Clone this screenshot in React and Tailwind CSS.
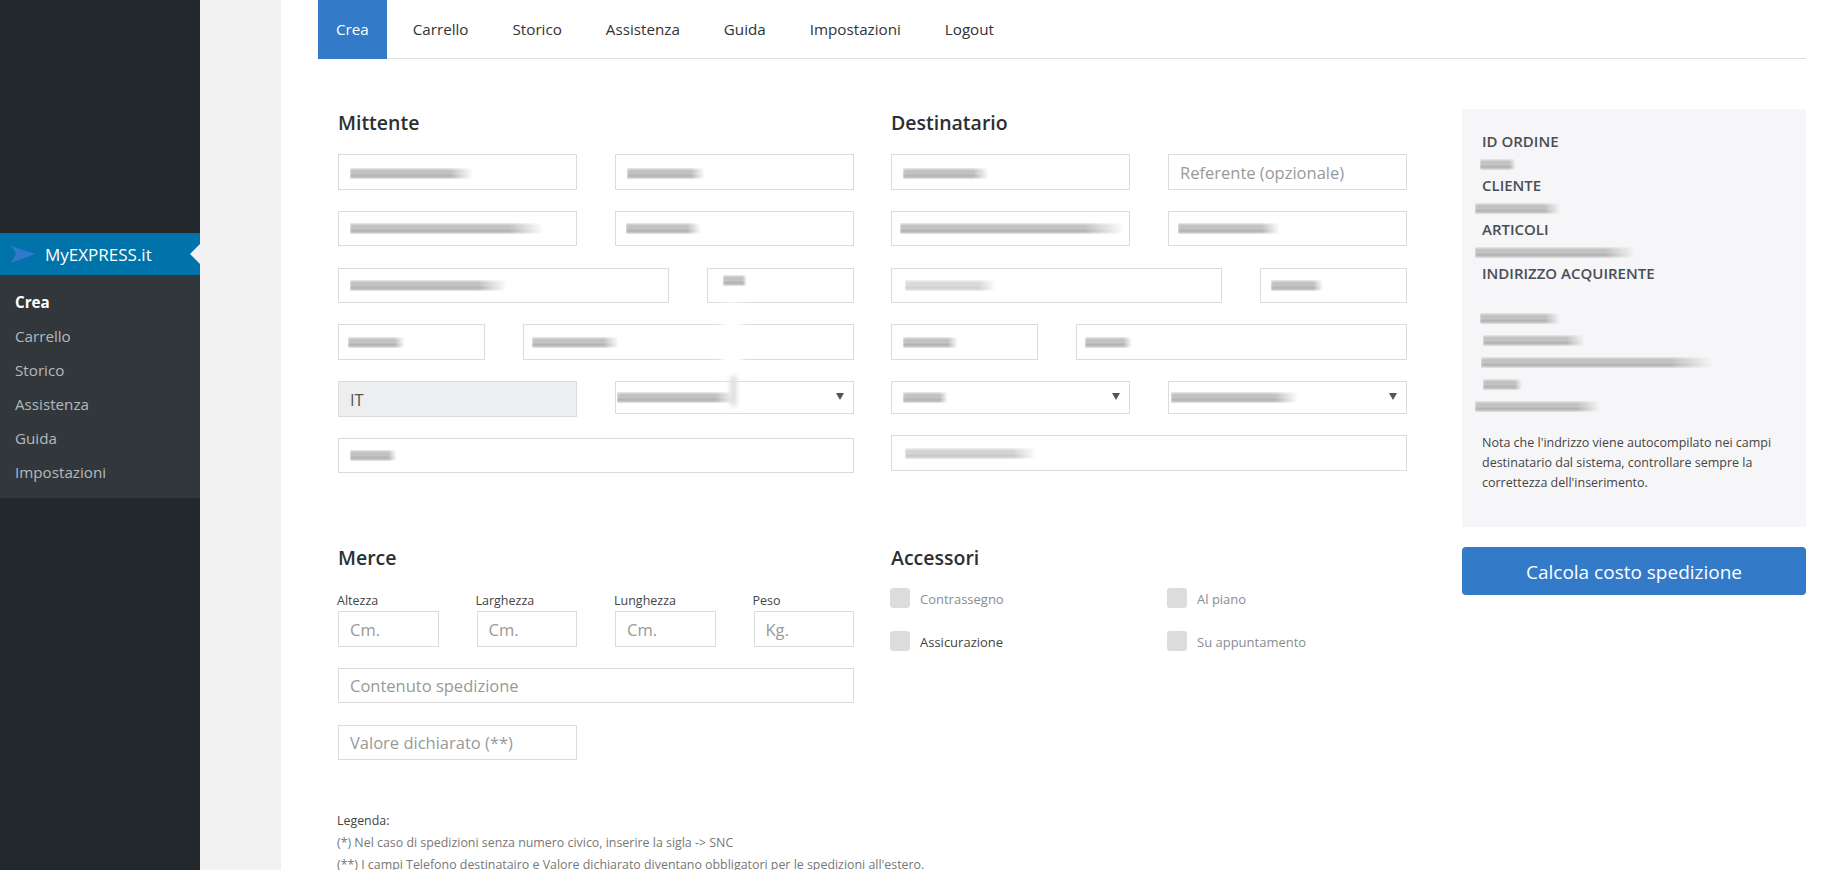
const menu = ['Carrello', 'Storico', 'Assistenza', 'Guida', 'Impostazioni']
const tabs = ['Carrello', 'Storico', 'Assistenza', 'Guida', 'Impostazioni', 'Logout']

function Blur({ className = '' }) {
  return <span className={`block h-[11px] blur-[1px] [mask-image:linear-gradient(to_right,black_82%,transparent)] bg-[linear-gradient(to_bottom,#e8e8e8,#b4b4b4_30%,#d2d2d2_50%,#a2a2a2_70%,#e4e4e4)] ${className}`} />
}

function Field({ className = '', readOnly, children }) {
  const tone = readOnly ? 'bg-[#edeef0] text-[#555]' : 'bg-white text-[#999]'
  return (
    <div className={`h-[35.5px] border border-[#dcdcdc] flex items-center text-[16.5px] ${tone} ${className}`}>
      {children}
    </div>
  )
}

function Select({ className = '', children }) {
  return (
    <div className={`h-[33px] border border-[#dcdcdc] bg-white flex items-center justify-between pr-[9px] ${className}`}>
      {children}
      <svg width="8" height="7" viewBox="0 0 8 7" className="mt-[-2px]"><polygon points="0,0 8,0 4,7" fill="#555" /></svg>
    </div>
  )
}

function Heading({ children }) {
  return <h2 className="h-[28px] mb-[18px] text-[19.5px] leading-[29px] font-semibold text-[#2b2f34]">{children}</h2>
}

function Check({ label, dark }) {
  return (
    <div className="flex items-center h-[20px] gap-[10px] ml-[-1px]">
      <span className="w-[20px] h-[20px] rounded-[3px] bg-[#dcdcdc]" />
      <span className={`text-[13px] mt-[2px] ${dark ? 'text-[#444]' : 'text-[#8a8d91]'}`}>{label}</span>
    </div>
  )
}

function Dim({ label, ph }) {
  return (
    <div className="col-span-3 relative">
      <label className="absolute left-[-1px] top-[-19px] text-[12.5px] leading-[18px] text-[#444]">{label}</label>
      <Field className="pl-[11px] pt-[2px]">{ph}</Field>
    </div>
  )
}

function Info({ label, children }) {
  return (
    <>
      <div className="h-[22px] leading-[20px] text-[15px] font-semibold text-[#4a4e54]">{label}</div>
      {children}
    </>
  )
}

function Line({ className = '' }) {
  return (
    <div className="h-[22px] flex items-center">
      <Blur className={className} />
    </div>
  )
}

export default function App() {
  return (
    <div className="flex h-[870px] overflow-hidden bg-white font-['Open_Sans','Noto_Sans',sans-serif]">
      <aside className="w-[200px] shrink-0 bg-[#23282d] pt-[233px]">
        <div className="relative h-[42px] bg-[#0073aa] flex items-center pl-[11px] gap-[10px]">
          <svg width="24" height="17" viewBox="0 0 24 17"><polygon points="0,0 24,8 0,17 5,8" fill="#3178cc" /></svg>
          <span className="text-[17px] text-white mt-[1px]">MyEXPRESS.it</span>
          <span className="absolute right-0 top-[11px] w-0 h-0 border-y-[10px] border-y-transparent border-r-[10px] border-r-[#f1f1f1]" />
        </div>
        <nav className="h-[223px] bg-[#32373c] pt-[10px] pl-[15px] text-[15.2px]">
          <div className="h-[34px] leading-[34px] font-bold text-white">Crea</div>
          {menu.map(m => (
            <div key={m} className="h-[34px] leading-[34px] text-[#b4b9be]">{m}</div>
          ))}
        </nav>
      </aside>

      <div className="w-[81px] shrink-0 bg-[#f1f1f1]" />

      <main className="flex-1 pl-[37px] pr-[15px]">
        <div className="h-[59px] border-b border-[#dddddd] flex gap-[8px] text-[15.2px] text-[#333]">
          <div className="h-[59px] px-[18px] bg-[#337ac9] text-white flex items-center">Crea</div>
          {tabs.map(t => (
            <div key={t} className="px-[18px] flex items-center">{t}</div>
          ))}
        </div>

        <div className="flex pl-[20px] pt-[49px]">
          <div className="w-[1069px] shrink-0 grid grid-cols-[516px_516px] gap-x-[37px] gap-y-[70px] content-start">
            <section>
              <Heading>Mittente</Heading>
              <div className="relative grid grid-cols-12 gap-x-[38px] gap-y-[21.3px]">
                <Field className="col-span-6"><Blur className="ml-[11px] w-[123px] mt-[3px]" /></Field>
                <Field className="col-span-6"><Blur className="ml-[11px] w-[78px] mt-[3px]" /></Field>
                <Field className="col-span-6"><Blur className="ml-[11px] w-[194px]" /></Field>
                <Field className="col-span-6"><Blur className="ml-[10px] w-[75px]" /></Field>
                <Field className="col-span-8"><Blur className="ml-[11px] w-[157px]" /></Field>
                <Field className="col-span-4 items-start pt-[6px]"><Blur className="ml-[15px] w-[24px]" /></Field>
                <Field className="col-span-4"><Blur className="ml-[9px] w-[57px]" /></Field>
                <Field className="col-span-8"><Blur className="ml-[8px] w-[87px]" /></Field>
                <Field readOnly className="col-span-6 pl-[11px] pt-[3px]">IT</Field>
                <Select className="col-span-6"><Blur className="ml-[1px] w-[120px]" /></Select>
                <Field className="col-span-12"><Blur className="ml-[11px] w-[47px]" /></Field>
                <span className="absolute left-[384px] top-[149px] w-[20px] h-[76px] bg-white blur-[3px]" />
                <span className="absolute left-[392px] top-[222px] w-[7px] h-[30px] bg-[#e0e0e0] blur-[2px]" />
              </div>
            </section>

            <section>
              <Heading>Destinatario</Heading>
              <div className="grid grid-cols-12 gap-x-[38px] gap-y-[21.3px]">
                <Field className="col-span-6"><Blur className="ml-[11px] w-[86px] mt-[3px]" /></Field>
                <Field className="col-span-6 pl-[11px] pt-[4px]">Referente (opzionale)</Field>
                <Field className="col-span-6"><Blur className="ml-[8px] w-[225px]" /></Field>
                <Field className="col-span-6"><Blur className="ml-[9px] w-[102px]" /></Field>
                <Field className="col-span-8"><Blur className="ml-[13px] w-[91px] opacity-60" /></Field>
                <Field className="col-span-4"><Blur className="ml-[10px] w-[52px]" /></Field>
                <Field className="col-span-4"><Blur className="ml-[11px] w-[55px]" /></Field>
                <Field className="col-span-8"><Blur className="ml-[8px] w-[47px]" /></Field>
                <Select className="col-span-6"><Blur className="ml-[11px] w-[45px]" /></Select>
                <Select className="col-span-6"><Blur className="ml-[2px] w-[127px]" /></Select>
                <Field className="col-span-12"><Blur className="ml-[13px] w-[132px] opacity-70" /></Field>
              </div>
            </section>

            <section>
              <Heading>Merce</Heading>
              <div className="grid grid-cols-12 gap-x-[38px] pt-[22px]">
                <Dim label="Altezza" ph="Cm." />
                <Dim label="Larghezza" ph="Cm." />
                <Dim label="Lunghezza" ph="Cm." />
                <Dim label="Peso" ph="Kg." />
              </div>
              <Field className="mt-[21px] pl-[11px] pt-[2px]">Contenuto spedizione</Field>
              <Field className="mt-[21.5px] w-[239px] pl-[11px] pt-[2px]">Valore dichiarato (**)</Field>
            </section>

            <section>
              <Heading>Accessori</Heading>
              <div className="grid grid-cols-[277px_1fr] gap-y-[23px] mt-[-1px]">
                <Check label="Contrassegno" />
                <Check label="Al piano" />
                <Check label="Assicurazione" dark />
                <Check label="Su appuntamento" />
              </div>
            </section>

            <footer className="col-span-2 mt-[-20px] ml-[-1px] text-[12.4px] leading-[22px] text-[#777]">
              <div className="text-[#444]">Legenda:</div>
              <div>(*) Nel caso di spedizioni senza numero civico, inserire la sigla -&gt; SNC</div>
              <div>(**) I campi Telefono destinatairo e Valore dichiarato diventano obbligatori per le spedizioni all'estero.</div>
            </footer>
          </div>

          <div className="ml-[55px] w-[344px] shrink-0">
            <div className="mt-[1px] h-[418px] bg-[#f6f6f8] pt-[22px] px-[20px] text-[#444]">
              <Info label="ID ORDINE"><Line className="ml-[-2px] w-[36px]" /></Info>
              <Info label="CLIENTE"><Line className="ml-[-7px] w-[85px]" /></Info>
              <Info label="ARTICOLI"><Line className="ml-[-7px] w-[160px]" /></Info>
              <Info label="INDIRIZZO ACQUIRENTE">
                <div className="h-[22px]" />
                <Line className="ml-[-2px] w-[80px]" />
                <Line className="ml-[1px] w-[102px]" />
                <Line className="ml-[-1px] w-[232px]" />
                <Line className="ml-[1px] w-[39px]" />
                <Line className="ml-[-7px] w-[125px]" />
              </Info>
              <p className="mt-[16px] text-[12.5px] leading-[20px]">
                Nota che l'indrizzo viene autocompilato nei campi destinatario dal sistema, controllare sempre la correttezza dell'inserimento.
              </p>
            </div>
            <button className="mt-[20px] w-full h-[48px] pt-[2px] rounded-[4px] bg-[#337ac9] text-white text-[19px]">
              Calcola costo spedizione
            </button>
          </div>
        </div>
      </main>
    </div>
  )
}
